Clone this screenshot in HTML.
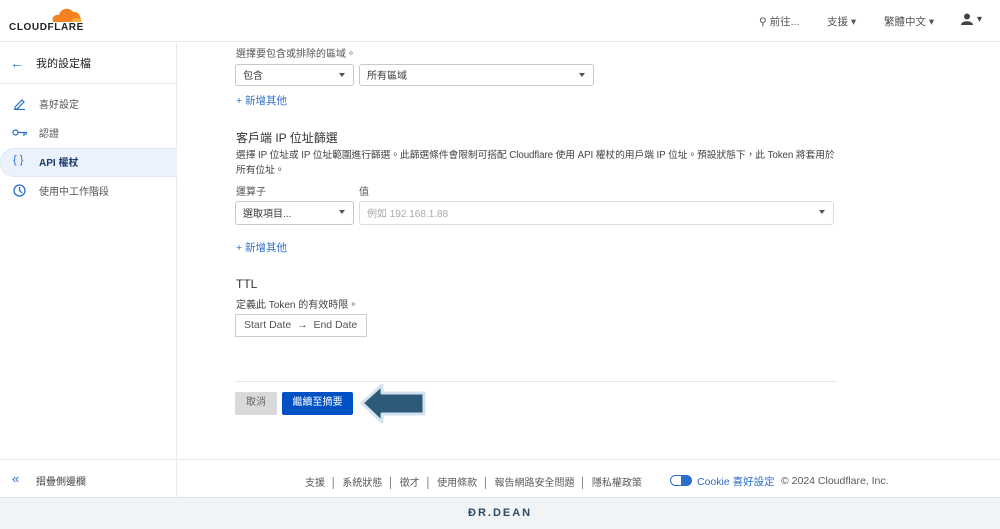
<!DOCTYPE html>
<html><head><meta charset="utf-8"><style>
*{box-sizing:border-box;margin:0;padding:0}
body{width:1000px;height:529px;overflow:hidden;background:#fff;font-family:"Liberation Sans","Noto Sans CJK TC",sans-serif;color:#36393a;position:relative;font-size:10px}
.abs{position:absolute}
.hdr{left:0;top:0;width:1000px;height:42px;border-bottom:1px solid #ebebeb}
.side{left:0;top:43px;width:177px;height:454px;border-right:1px solid #ebebeb}
.sel{position:absolute;height:22px;border:1px solid #c8c8c8;border-radius:3px;background:#fff;font-size:10px;padding:2px 7px 0;color:#36393a}
.sel:after{content:"";position:absolute;right:8px;top:8px;border:3.5px solid transparent;border-top:4px solid #555}
.blue{color:#2c6ecb}
.ft{font-size:10px;color:#595959}
</style></head><body>
<div class="abs hdr">
 <svg class="abs" style="left:47px;top:6px" width="36" height="16" viewBox="0 0 36 16"><path d="M6 16 C4 10 10 8 12 9 C13 3 22 0 26 6 C30 5 34 8 34 16Z" fill="#f6821f"/><path d="M24 16 C25 12 29 11 33 13 L35 16Z" fill="#fbad41"/></svg>
 <div class="abs" style="left:9px;top:22px;font-weight:bold;font-size:10px;letter-spacing:0.6px;color:#222">CLOUDFLARE</div>
 <div class="abs" style="left:759px;top:14px;font-size:10.5px;color:#555">⚲ 前往...</div>
 <div class="abs" style="left:827px;top:14px;font-size:10.5px;color:#555">支援 ▾</div>
 <div class="abs" style="left:884px;top:14px;font-size:10.5px;color:#555">繁體中文 ▾</div>
 <svg class="abs" style="left:961px;top:13px" width="12" height="13" viewBox="0 0 12 13"><circle cx="6" cy="3.5" r="3" fill="#444"/><path d="M0 12 C0 7 12 7 12 12Z" fill="#444"/></svg>
 <div class="abs" style="left:977px;top:14px;font-size:10px;color:#444">▾</div>
</div>
<div class="abs side">
 <div class="abs" style="left:0;top:0;width:177px;height:41px;border-bottom:1px solid #e6e6e6"></div>
 <div class="abs blue" style="left:10px;top:12px;font-size:14px">←</div>
 <div class="abs" style="left:36px;top:12px;font-size:11px;color:#222">我的設定檔</div>
 <svg class="abs" style="left:13px;top:54px" width="13" height="13" viewBox="0 0 13 13" fill="none" stroke="#2c6ecb" stroke-width="1.2"><path d="M2 10 L9 3 L11 5 L4 12 H2Z M1 12.5H12"/></svg>
 <div class="abs" style="left:39px;top:53px;font-size:10px;color:#555">喜好設定</div>
 <svg class="abs" style="left:12px;top:86px" width="16" height="8" viewBox="0 0 16 8" fill="none" stroke="#2c6ecb" stroke-width="1.2"><circle cx="3.5" cy="3.5" r="2.5"/><path d="M6 3.5H15M12 3.5V7M14 3.5V6"/></svg>
 <div class="abs" style="left:39px;top:82px;font-size:10px;color:#555">認證</div>
 <div class="abs" style="left:0;top:105px;width:177px;height:29px;background:#ebf2fc;border-radius:14px 0 0 14px;border:1px solid #dde7f5;border-right:none"></div>
 <div class="abs blue" style="left:13px;top:111px;font-size:11px">{ }</div>
 <div class="abs" style="left:39px;top:111px;font-size:10px;color:#1d3a6b;font-weight:bold">API 權杖</div>
 <svg class="abs" style="left:13px;top:141px" width="13" height="13" viewBox="0 0 13 13" fill="none" stroke="#2c6ecb" stroke-width="1.3"><circle cx="6.5" cy="6.5" r="5.5"/><path d="M6.5 3V6.5L9 9"/></svg>
 <div class="abs" style="left:39px;top:140px;font-size:10px;color:#555">使用中工作階段</div>
 <div class="abs" style="left:0;top:416px;width:177px;height:1px;background:#e6e6e6"></div>
</div>
<div class="abs" style="left:178px;top:459px;width:822px;height:1px;background:#e6e6e6"></div>
<div class="abs blue" style="left:12px;top:471px;font-size:13px">«</div>
<div class="abs" style="left:36px;top:473px;font-size:10px;color:#444">摺疊側邊欄</div>

<div class="abs" style="left:236px;top:45px;font-size:10px;color:#555">選擇要包含或排除的區域。</div>
<div class="sel" style="left:235px;top:64px;width:119px">包含</div>
<div class="sel" style="left:359px;top:64px;width:235px">所有區域</div>
<div class="abs blue" style="left:236px;top:93px;font-size:10.5px">+ 新增其他</div>
<div class="abs" style="left:236px;top:129px;font-size:12px;color:#333">客戶端 IP 位址篩選</div>
<div class="abs" style="left:236px;top:148px;width:620px;font-size:9.8px;line-height:15px;color:#444;letter-spacing:-0.1px;white-space:nowrap">選擇 IP 位址或 IP 位址範圍進行篩選。此篩選條件會限制可搭配 Cloudflare 使用 API 權杖的用戶端 IP 位址。預設狀態下，此 Token 將套用於<br>所有位址。</div>
<div class="abs" style="left:236px;top:183px;font-size:10px;color:#555">運算子</div>
<div class="abs" style="left:359px;top:183px;font-size:10px;color:#555">值</div>
<div class="sel" style="left:235px;top:201px;width:119px;height:24px;padding-top:3px">選取項目...</div>
<div class="sel" style="left:359px;top:201px;width:475px;height:24px;padding-top:3px;color:#aaa;border-color:#ddd">例如 192.168.1.88</div>
<div class="abs blue" style="left:236px;top:240px;font-size:10.5px">+ 新增其他</div>
<div class="abs" style="left:236px;top:277px;font-size:12px;color:#333">TTL</div>
<div class="abs" style="left:236px;top:296px;font-size:10px;color:#444">定義此 Token 的有效時限。</div>
<div class="abs" style="left:235px;top:314px;width:132px;height:23px;border:1px solid #ccc;font-size:10.5px;color:#555;padding:4px 0 0 8px;white-space:nowrap">Start Date &nbsp;→ &nbsp;End Date</div>
<div class="abs" style="left:235px;top:381px;width:602px;height:1px;background:#e6e6e6"></div>
<div class="abs" style="left:235px;top:392px;width:42px;height:23px;background:#d9d9d9;border-radius:2px;font-size:10px;color:#666;text-align:center;line-height:21px">取消</div>
<div class="abs" style="left:282px;top:392px;width:71px;height:23px;background:#0051c3;border-radius:2px;font-size:10px;color:#fff;text-align:center;line-height:21px">繼續至摘要</div>
<svg class="abs" style="left:358px;top:380px" width="72" height="48" viewBox="0 0 72 48"><path d="M4 23 L24 5 V13 H66 V34 H24 V42Z" fill="#2c5a78" stroke="#d3e3ee" stroke-width="3" stroke-linejoin="round"/></svg>

<div class="abs ft" style="left:305px;top:474px;white-space:nowrap">支援 &nbsp;│&nbsp; 系統狀態 &nbsp;│&nbsp; 徵才 &nbsp;│&nbsp; 使用條款 &nbsp;│&nbsp; 報告網路安全問題 &nbsp;│&nbsp; 隱私權政策</div>
<div class="abs" style="left:670px;top:475px;width:22px;height:11px;border:1.3px solid #2c6ecb;border-radius:6px;background:linear-gradient(90deg,#fff 50%,#2c6ecb 50%)"></div>
<div class="abs blue" style="left:697px;top:474px;font-size:10.5px">Cookie 喜好設定</div>
<div class="abs ft" style="left:781px;top:475px;font-size:10.5px">© 2024 Cloudflare, Inc.</div>
<div class="abs" style="left:0;top:497px;width:1000px;height:32px;background:#f1f4f7;border-top:1px solid #dde3ea"></div>
<div class="abs" style="left:468px;top:507px;font-size:11px;font-weight:bold;letter-spacing:2px;color:#2c4a66">ÐR.DEAN</div>
</body></html>
